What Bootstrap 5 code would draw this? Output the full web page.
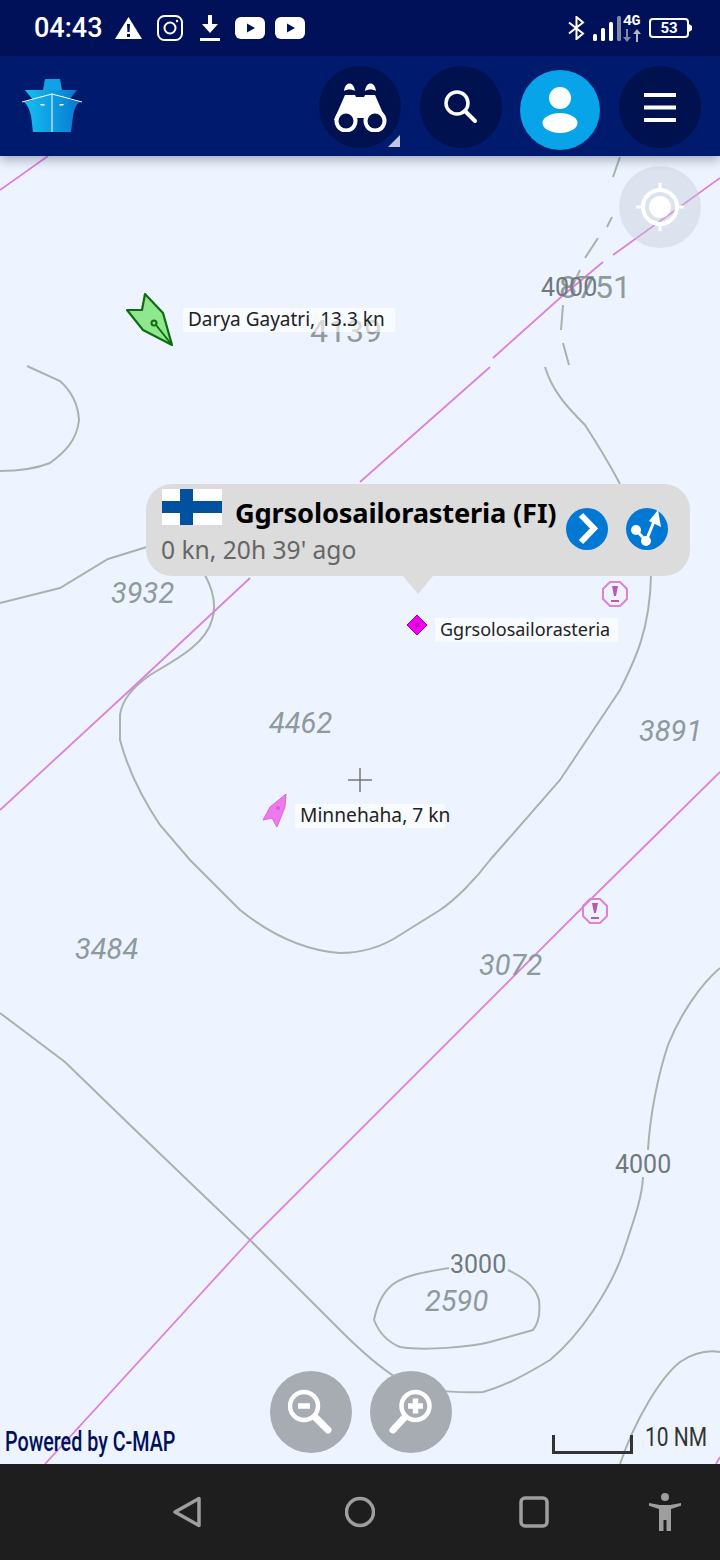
<!DOCTYPE html>
<html lang="en">

<head>
    <meta charset="UTF-8">
    <meta name="viewport" content="width=device-width, initial-scale=1.0">
    <title>MarineTraffic</title>
    <link href="https://cdn.jsdelivr.net/npm/bootstrap@5.3.0/dist/css/bootstrap.min.css" rel="stylesheet">
    <style>
        html, body { height: 1560px; overflow: hidden; }
        body { width: 720px; background: #edf4ff; font-family: "Noto Sans", "Liberation Sans", sans-serif; }

        /* status bar */
        .status-strip { height: 56px; background: #00115a; color: #fff; padding: 0 27px 0 35px; flex: none; }
        .status-time { font: 500 27px Roboto, sans-serif; width: 81px; margin-left: -1px; }
        .status-strip svg { display: block; flex: none; }
        .gap-ig { margin-left: 15px; }
        .gap-dl { margin-left: 17px; }
        .gap-yt { margin-left: 15px; }
        .gap-yt2 { margin-left: 10px; }
        .net-label { font: 700 15px/1 "Liberation Mono", monospace; letter-spacing: -.5px; }
        .batt-box { width: 40px; height: 20px; border: 2px solid #fff; border-radius: 4px; font: 700 15px/16px Roboto, sans-serif; text-align: center; }

        /* app bar */
        .app-bar { height: 100px; background: #001a6e; padding: 10px 19px 0 22px; flex: none; z-index: 5; box-shadow: 0 4px 10px rgba(30, 40, 70, .35); }
        .ship-logo { margin-top: 13px; }
        .round-btn { width: 82px; height: 82px; background: #00114f; border: 0; padding: 0; flex: none; }
        .round-btn.user-btn { width: 80px; height: 80px; background: #08a4ea; margin-top: 4px; margin-left: -1px; }
        .app-btns { gap: 19px; }
        .corner-tri { right: 1px; bottom: 1px; width: 12px; height: 12px; background: #c0c6dc; clip-path: polygon(100% 0, 100% 100%, 0 100%); }

        /* chart */
        .chart-area { height: 1308px; flex: none; }
        .chart-lines { left: 0; top: 0; }
        .depth-soft { font: italic 400 29px Roboto, sans-serif; fill: #8f9a9c; }
        .depth-plain { font: 400 25px Roboto, sans-serif; fill: #70797c; }
        .depth-big { font: 400 32px Roboto, sans-serif; fill: #8f9a9c; }

        .ship-tag { background: rgba(255, 255, 255, .62); height: 24px; padding: 0 5px; font-size: 19px; line-height: 22px; color: #222; white-space: nowrap; }
        .tag-darya { left: 183px; top: 152px; width: 212px; }
        .tag-minne { left: 295px; top: 648px; width: 150px; font-size: 19.2px; }
        .tag-ggrs { left: 435px; top: 462px; width: 183px; font-size: 18px; }

        .ship-popup { left: 146px; top: 328px; width: 544px; height: 92px; background: #dcdcdc; border-radius: 26px; padding: 5px 22px 0 16px; }
        .ship-popup::after { content: ""; position: absolute; left: 257px; bottom: -18px; border: solid transparent; border-width: 18px 15px 0; border-top-color: #dcdcdc; }
        .fi-flag { display: block; flex: none; }
        .flag-row { gap: 13px; }
        .popup-name { font-size: 27.3px; font-weight: 700; line-height: 36px; color: #000; margin-top: 6px; white-space: nowrap; letter-spacing: -.2px; }
        .popup-sub { font-size: 24.6px; line-height: 30px; color: #666; margin-top: 4px; margin-left: -1px; white-space: nowrap; }
        .popup-btns { gap: 18px; margin-top: 19px; }

        .locate-btn { right: 19px; top: 10px; width: 82px; height: 82px; background: rgba(195, 200, 212, .4); }
        .zoom-btns { left: 270px; top: 1215px; gap: 18px; }
        .zoom-disc { width: 82px; height: 82px; background: #a7acb3; }
        .powered-by { left: 5px; top: 1269px; font: 500 27px/34px Roboto, sans-serif; color: #00115a; transform: scaleX(.73); transform-origin: left center; white-space: nowrap; }
        .scale-bar { left: 552px; top: 1279px; width: 81px; height: 19px; border: solid #333; border-width: 0 3px 3px; }
        .scale-text { left: 645px; top: 1268px; font: 400 25px/28px Roboto, sans-serif; color: #333; transform: scaleX(.84); transform-origin: left center; white-space: nowrap; }

        /* android nav */
        .sys-nav { height: 96px; background: #1e1e1e; padding-left: 172px; flex: none; z-index: 5; }
        .sys-nav svg { display: block; flex: none; }
        .gap-home { margin-left: 143px; }
        .gap-recent { margin-left: 144px; }
        .gap-access { margin-left: 100px; }
    </style>
</head>

<body class="d-flex flex-column">
    <!-- status bar -->
    <div class="status-strip d-flex align-items-center">
        <span class="status-time">04:43</span>
        <svg width="27" height="24" viewBox="0 0 27 24"><path d="M13.5 1 27 23H0z" fill="#fff"/><path d="M12 8h3l-.4 8h-2.200zM12 18h3v3h-3z" fill="#00115a"/></svg>
        <svg class="gap-ig" width="26" height="26" viewBox="0 0 26 26" fill="none" stroke="#fff" stroke-width="2"><rect x="1" y="1" width="24" height="24" rx="6.500"/><circle cx="13" cy="13" r="5.500"/><circle cx="20" cy="6" r="1.200" fill="#fff" stroke="none"/></svg>
        <svg class="gap-dl" width="20" height="26" viewBox="0 0 20 26"><path d="M8 0h4v9h6l-8 9-8-9h6z" fill="#fff"/><rect y="23" width="20" height="3" fill="#fff"/></svg>
        <svg class="gap-yt" width="30" height="22" viewBox="0 0 30 22"><rect width="30" height="22" rx="6" fill="#fff"/><path d="M12 6.500 20 11l-8 4.500z" fill="#00115a"/></svg>
        <svg class="gap-yt2" width="30" height="22" viewBox="0 0 30 22"><rect width="30" height="22" rx="6" fill="#fff"/><path d="M12 6.500 20 11l-8 4.500z" fill="#00115a"/></svg>

        <svg class="ms-auto" width="17" height="24" viewBox="0 0 17 24" fill="none" stroke="#fff" stroke-width="2"><path d="M1 6.500 15 17.500 8.500 23V1L15 6.500 1 17.500"/></svg>
        <svg class="ms-2" width="29" height="25" viewBox="0 0 29 25"><rect x="0" y="18" width="4" height="7" rx="1.500" fill="#fff"/><rect x="8" y="12" width="4" height="13" rx="1.500" fill="#fff"/><rect x="16" y="6" width="4" height="19" rx="1.500" fill="#fff"/><rect x="24" y="0" width="4" height="25" rx="1.500" fill="#8087a8"/></svg>
        <div class="d-flex flex-column align-items-center" style="width:19px">
            <span class="net-label">4G</span>
            <svg width="18" height="13" viewBox="0 0 18 13"><path d="M3 0h2v8h3l-4 5-4-5h3z" fill="#8087a8"/><path d="M14 0l4 5h-3v8h-2V5h-3z" fill="#b0b5c8"/></svg>
        </div>
        <div class="batt-box ms-2">53</div>
        <svg width="4" height="8" viewBox="0 0 4 8"><path d="M0 0 3 2v4L0 8z" fill="#fff"/></svg>
    </div>

    <!-- app bar -->
    <div class="app-bar d-flex align-items-start justify-content-between position-relative">
        <svg class="ship-logo" width="60" height="54" viewBox="22 79 60 54">
            <defs><linearGradient id="hullFill" x1="0" x2="1" y1="0" y2="0"><stop offset="0" stop-color="#14c0f2"/><stop offset="1" stop-color="#0878d2"/></linearGradient></defs>
            <path d="M45 79h15l2 11H43z" fill="#12a0e6"/>
            <path d="M25 90h52l-8 10H33z" fill="url(#hullFill)"/>
            <path d="M24 102 52 95l28 7c-5 3-6 9-7 14l-2 16H33l-2-16c-1-5-3-11-7-14z" fill="url(#hullFill)"/>
            <path d="M22 102 52 94l30 8M52 94v38" fill="none" stroke="#fff" stroke-width="1"/>
            <path d="M40 104h4l1 1.500h-4zM60 104h4l-1 1.500h-4z" fill="#fff"/>
        </svg>
        <div class="app-btns d-flex align-items-start">
            <button class="round-btn btn rounded-circle position-relative d-flex align-items-center justify-content-center" type="button">
                <svg width="54" height="50" viewBox="333 82 54 50">
                    <path d="M344 91c1-10 10-10 11 0-3-2-8-2-11 0zM365 91c1-10 10-10 11 0-3-2-8-2-11 0z" fill="#fff"/>
                    <path d="M345 95h10l1 2h8l1-2h10l11 25h-52z" fill="#fff"/>
                    <rect x="354" y="118" width="12" height="12" fill="#00114f"/>
                    <circle cx="346" cy="121" r="11.500" fill="#fff"/><circle cx="346" cy="121" r="7.500" fill="#00114f"/>
                    <circle cx="375" cy="121" r="11.500" fill="#fff"/><circle cx="375" cy="121" r="7.500" fill="#00114f"/>
                </svg>
                <span class="corner-tri position-absolute"></span>
            </button>
            <button class="round-btn btn rounded-circle d-flex align-items-center justify-content-center" type="button">
                <svg width="36" height="36" viewBox="0 0 36 36" fill="none" stroke="#fff" stroke-linecap="round"><circle cx="14" cy="14" r="11" stroke-width="3.500"/><path d="M22 22 32 32" stroke-width="4"/></svg>
            </button>
            <button class="round-btn user-btn btn rounded-circle d-flex align-items-center justify-content-center" type="button">
                <svg width="36" height="48" viewBox="0 0 36 48"><circle cx="18" cy="12" r="11" fill="#fff"/><ellipse cx="18" cy="37" rx="17.500" ry="10" fill="#fff"/></svg>
            </button>
            <button class="round-btn btn rounded-circle d-flex align-items-center justify-content-center" type="button">
                <svg width="32" height="29" viewBox="0 0 32 29" fill="#fff"><rect width="32" height="4"/><rect y="12.500" width="32" height="4"/><rect y="25" width="32" height="4"/></svg>
            </button>
        </div>
    </div>

    <!-- chart -->
    <div class="chart-area position-relative overflow-hidden">
        <svg class="chart-lines position-absolute" width="720" height="1308" viewBox="0 156 720 1308" fill="none">
            <g stroke="#a8b3ad" stroke-width="2">
                <path d="M27 366 60 381C70 390 78 403 79 420 77 440 65 452 50 463 35 469 15 471 0 471"/>
                <path d="M0 603 60 588 108 559 150 546"/>
                <path d="M205 575C213 590 217 605 212 620 205 645 175 660 150 675 132 688 122 700 120 715V740C128 770 140 795 160 825L190 860 240 910C265 930 300 950 340 953 365 953 385 945 400 935L440 910C455 900 475 880 490 860L560 780 620 690C635 660 650 630 651 575"/>
                <path d="M545 367C552 390 565 405 585 425 598 445 610 465 620 484"/>
                <path d="M620 157 613 177M612 217 607 227M598 238 585 258M580 270 572 287M563 305 561 330M563 343 569 365"/>
                <path d="M0 1013 65 1062 130 1125 250 1240 340 1330C360 1350 380 1368 400 1380 420 1390 445 1393 483 1392 505 1386 525 1375 550 1360 580 1335 610 1290 623 1253 632 1225 642 1200 643 1177"/>
                <path d="M449 1268C425 1272 405 1275 392 1285 380 1295 376 1310 374 1320 380 1335 390 1343 400 1347 425 1351 470 1347 490 1342L533 1330C540 1322 540 1310 539 1300 535 1285 522 1277 508 1270"/>
                <path d="M720 968C700 985 680 1015 668 1045 658 1075 650 1115 648 1150"/>
                <path d="M720 1352C708 1350 695 1352 680 1362 660 1378 635 1420 620 1464"/>
            </g>
            <g stroke="#dc82d9" stroke-width="1.800">
                <path d="M0 190 48 156"/>
                <path d="M720 178 613 255M603 262 560 298 493 358"/>
                <path d="M490 367 360 482M250 578 130 690 0 810"/>
                <path d="M720 772 590 900 250 1240 45 1464"/>
                <path d="M720 1457 716 1464"/>
            </g>
            <g id="cautionMark" stroke="#dc82d9" stroke-width="2">
                <path d="M610 582h10l7 7v10l-7 7h-10l-7-7v-10z"/>
                <path d="M612 586h6l-2 10h-2z" fill="#b85ab5" stroke="none"/>
                <path d="M611 601h8" stroke="#b85ab5"/>
            </g>
            <use href="#cautionMark" x="-20" y="317"/>
            <path d="M348 780h24M360 768v24" stroke="#777" stroke-width="1.500"/>

            <text class="depth-soft" x="111" y="603">3932</text>
            <text class="depth-soft" x="269" y="733">4462</text>
            <text class="depth-soft" x="639" y="741">3891</text>
            <text class="depth-soft" x="75" y="959">3484</text>
            <text class="depth-soft" x="479" y="975">3072</text>
            <text class="depth-soft" x="425" y="1311">2590</text>
            <text class="depth-big" x="310" y="342">4139</text>
            <text class="depth-big" x="559" y="298">8751</text>
            <text class="depth-plain" x="541" y="296">4000</text>
            <text class="depth-plain" x="615" y="1173">4000</text>
            <text class="depth-plain" x="450" y="1273">3000</text>

            <!-- vessels -->
            <path d="M127 310 142 310 145 294 163 313 172 345 143 330z" fill="#8fe88f" stroke="#0f6d0f" stroke-width="2.200" stroke-linejoin="round"/>
            <circle cx="154" cy="323" r="2.500" stroke="#0f6d0f" stroke-width="2"/><path d="M156 325 172 345" stroke="#0f6d0f" stroke-width="2"/>
            <path d="M286 794 285 807 277 827 272 818 263 820 270 807z" fill="#ee78ee" stroke="#d868d8"/>
            <circle cx="278" cy="808" r="2" fill="#d060d0"/>
            <path d="M417 615 427 625 417 635 407 625z" fill="#f000f0" stroke="#990099"/>
            <circle cx="417" cy="625" r="1.500" stroke="#990099"/>
        </svg>

        <div class="ship-tag position-absolute tag-darya">Darya Gayatri, 13.3 kn</div>
        <div class="ship-tag position-absolute tag-minne">Minnehaha, 7 kn</div>
        <div class="ship-tag position-absolute tag-ggrs">Ggrsolosailorasteria</div>

        <div class="locate-btn position-absolute rounded-circle d-flex align-items-center justify-content-center">
            <svg width="50" height="50" viewBox="0 0 50 50" fill="none" stroke="#fff"><circle cx="25" cy="25" r="17" stroke-width="4"/><circle cx="25" cy="25" r="11" fill="#fff" stroke="none"/><path d="M25 1v6M25 43v6M1 25h6M43 25h6" stroke-width="3"/></svg>
        </div>

        <!-- popup -->
        <div class="ship-popup position-absolute d-flex justify-content-between">
            <div>
                <div class="flag-row d-flex align-items-start">
                    <svg class="fi-flag" width="60" height="36" viewBox="0 0 60 36"><rect width="60" height="36" fill="#fff"/><rect x="18" width="13" height="36" fill="#00519e"/><rect y="12" width="60" height="12" fill="#00519e"/></svg>
                    <span class="popup-name">Ggrsolosailorasteria (FI)</span>
                </div>
                <div class="popup-sub">0 kn, 20h 39' ago</div>
            </div>
            <div class="popup-btns d-flex align-items-start">
                <svg width="42" height="42" viewBox="0 0 42 42"><circle cx="21" cy="21" r="21" fill="#0078d4"/><path d="M15 7 28 20.500 15 34" fill="none" stroke="#fff" stroke-width="6"/></svg>
                <svg width="42" height="42" viewBox="0 0 42 42"><circle cx="21" cy="21" r="21" fill="#0078d4"/><path d="M10 22 20 33 31 6" fill="none" stroke="#fff" stroke-width="3"/><circle cx="10" cy="22" r="5" fill="#fff"/><circle cx="20" cy="33" r="5" fill="#fff"/><path d="M32 2 35 19 23 13z" fill="#fff"/></svg>
            </div>
        </div>

        <!-- zoom buttons -->
        <div class="zoom-btns position-absolute d-flex">
            <div class="zoom-disc rounded-circle d-flex align-items-center justify-content-center">
                <svg width="46" height="46" viewBox="0 0 46 46" fill="none" stroke="#fff" stroke-linecap="round"><circle cx="16" cy="17" r="14" stroke-width="4.500"/><path d="M28 29 40 41" stroke-width="7"/><path d="M10 17h12" stroke-width="5.500" stroke-linecap="butt"/></svg>
            </div>
            <div class="zoom-disc rounded-circle d-flex align-items-center justify-content-center">
                <svg width="46" height="46" viewBox="0 0 46 46" fill="none" stroke="#fff" stroke-linecap="round"><circle cx="27.500" cy="17" r="14" stroke-width="4.500"/><path d="M16 29 5 41" stroke-width="7"/><path d="M20 17h15M27.500 9.500v15" stroke-width="5.500" stroke-linecap="butt"/></svg>
            </div>
        </div>

        <div class="powered-by position-absolute">Powered by C-MAP</div>
        <div class="scale-bar position-absolute"></div>
        <div class="scale-text position-absolute">10 NM</div>
    </div>

    <!-- android nav -->
    <div class="sys-nav d-flex align-items-center">
        <svg width="30" height="32" viewBox="0 0 30 32" fill="none" stroke="#9e9e9e" stroke-width="3.500" stroke-linejoin="round"><path d="M3 16 27 2.500V29.500z"/></svg>
        <svg class="gap-home" width="30" height="32" viewBox="0 0 30 32" fill="none" stroke="#9e9e9e" stroke-width="3.500"><circle cx="15" cy="16" r="13.500"/></svg>
        <svg class="gap-recent" width="30" height="32" viewBox="0 0 30 32" fill="none" stroke="#9e9e9e" stroke-width="3.500"><rect x="2" y="2" width="26" height="28" rx="4"/></svg>
        <svg class="gap-access" width="32" height="38" viewBox="0 0 32 38" fill="#9e9e9e"><circle cx="16" cy="4" r="4"/><path d="M0 10 11 12h10L32 10l.5 2.500L22 16v22h-4.500V27h-3v11H10V16L-.5 12.500z"/></svg>
    </div>

    <script src="https://cdn.jsdelivr.net/npm/bootstrap@5.3.0/dist/js/bootstrap.bundle.min.js"></script>
</body>

</html>
